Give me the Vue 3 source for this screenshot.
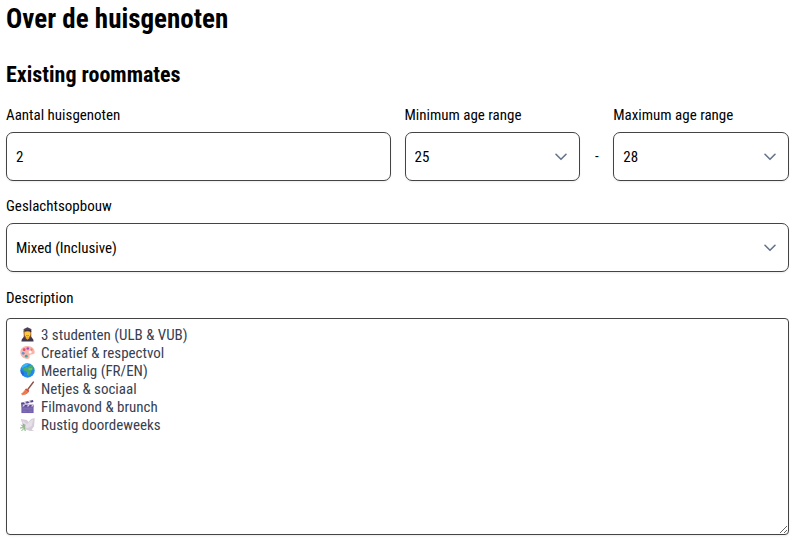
<script setup>
import { ref } from 'vue'

const count = ref('2')
const minAge = ref('25')
const maxAge = ref('28')
const gender = ref('Mixed (Inclusive)')
const description = ref(
  [
    '3 studenten (ULB & VUB)',
    'Creatief & respectvol',
    'Meertalig (FR/EN)',
    'Netjes & sociaal',
    'Filmavond & brunch',
    'Rustig doordeweeks',
  ].join('\n')
)
const ages = Array.from({ length: 43 }, (_, i) => String(18 + i))
const genders = ['Mixed (Inclusive)', 'Female', 'Male']
</script>

<template>
  <main class="page">
    <h1>Over de huisgenoten</h1>
    <h2>Existing roommates</h2>

    <form class="form" @submit.prevent>
      <div class="row">
        <div class="field">
          <label for="count">Aantal huisgenoten</label>
          <input id="count" v-model="count" class="control" type="text" inputmode="numeric" />
        </div>
        <div class="range">
          <div class="field">
            <label for="min-age">Minimum age range</label>
            <div class="select">
              <select id="min-age" v-model="minAge" class="control">
                <option v-for="age in ages" :key="age">{{ age }}</option>
              </select>
              <svg class="chevron" viewBox="0 0 12 8" aria-hidden="true"><path d="M1 1.300 6 6.300l5-5" /></svg>
            </div>
          </div>
          <span class="dash">-</span>
          <div class="field">
            <label for="max-age">Maximum age range</label>
            <div class="select">
              <select id="max-age" v-model="maxAge" class="control">
                <option v-for="age in ages" :key="age">{{ age }}</option>
              </select>
              <svg class="chevron" viewBox="0 0 12 8" aria-hidden="true"><path d="M1 1.300 6 6.300l5-5" /></svg>
            </div>
          </div>
        </div>
      </div>

      <div class="field">
        <label for="gender">Geslachtsopbouw</label>
        <div class="select">
          <select id="gender" v-model="gender" class="control">
            <option v-for="item in genders" :key="item">{{ item }}</option>
          </select>
          <svg class="chevron" viewBox="0 0 12 8" aria-hidden="true"><path d="M1 1.300 6 6.300l5-5" /></svg>
        </div>
      </div>

      <div class="field description">
        <label for="description">Description</label>
        <div class="editor">
          <textarea id="description" v-model="description" spellcheck="false"></textarea>
          <div class="marks" aria-hidden="true">
            <!-- graduate -->
            <svg viewBox="0 0 16 16">
              <path d="M4 4h8v6l1 2H3l1-2z" fill="#7b4a35" />
              <path d="M1.500 15.500c0-3 2-4.500 4.500-4.500h4c2.500 0 4.500 1.500 4.500 4.500z" fill="#40364f" />
              <path d="M6 10h4v2l-2 1.500L6 12z" fill="#e7a936" />
              <ellipse cx="8" cy="7.300" rx="3.300" ry="3.700" fill="#ffc83d" />
              <path d="M4 2.500h8v2.700c-2-1-6-1-8 0z" fill="#33293f" />
              <path d="M8 .3 12.500 2.300 8 4 3.500 2.300z" fill="#4b4059" />
              <path d="M4.200 3.500v3.500" stroke="#d99a2c" />
              <path d="M6.700 9q1.300.8 2.600 0" stroke="#a24b36" stroke-width=".7" />
            </svg>
            <!-- palette -->
            <svg viewBox="0 0 16 16">
              <path d="M8 1C3.500 1 .3 3.800.3 7.800c0 4 3.200 7 7.500 7 2 0 2.600-1 2.300-2.300-.3-1.500.3-2.500 1.900-2.500 2.300 0 3.700-.4 3.700-2.500C15.700 4 12.500 1 8 1z" fill="#f9b5a9" />
              <circle cx="10.800" cy="7.500" r="1.600" fill="#fff" />
              <circle cx="4.500" cy="5" r="1.500" fill="#e64b68" />
              <circle cx="8.300" cy="3.700" r="1.400" fill="#a94acb" />
              <circle cx="12.300" cy="4.900" r="1.200" fill="#ef7f50" />
              <circle cx="3.400" cy="8.900" r="1.500" fill="#4d9ae8" />
              <circle cx="6.700" cy="11.900" r="1.500" fill="#34aaa7" />
            </svg>
            <!-- globe -->
            <svg viewBox="0 0 16 16">
              <circle cx="8" cy="8" r="7.700" fill="#2389e8" />
              <path d="M1.500 4.500A7.700 7.700 0 0 1 8 .3l1 1-2 2.200-3 .7-1 2z" fill="#3bb5f0" />
              <path d="m3.500 5.500 3-1.200 2 .3 1-1.500 1.500-.4L9.500 1A7.500 7.500 0 0 1 14.500 5l-.7 2-2 1.500-.7 3-2.300 2.300-1.300-1.200.1-2.600-1.500-1.500-2-.5z" fill="#49ad68" />
              <path d="M.6 7.500 3 9l1.500 2-1 2.500A7.500 7.500 0 0 1 .6 7.500z" fill="#2868d5" />
              <path d="m9 5 2 .8 1.700-.5.3 1.700-2 .6-2-.8z" fill="#75c56f" />
            </svg>
            <!-- broom -->
            <svg viewBox="0 0 16 16">
              <path d="m14.200 1.200-6 8" stroke="#8e5146" stroke-width="1.700" stroke-linecap="round" />
              <path d="m6.500 8 3.300 2.400c-.6 2.600-3 4.500-7.400 4.800L1 13.700c2.500-1.200 3.200-3.600 5.500-5.700z" fill="#f28455" />
              <path d="m6.500 8 3.300 2.400-.7 1.400L5.400 9z" fill="#cf4e4e" />
              <path d="m6.700 10.300-3 3.400m4.500-2.500-2.500 3" stroke="#db653f" stroke-width=".7" />
            </svg>
            <!-- clapper board -->
            <svg viewBox="0 0 16 16">
              <path d="M1.500 7h13v8h-13z" fill="#7461ad" />
              <path d="M1.500 6h13v2h-13z" fill="#5a478f" />
              <path d="m1 4 12.800-3 .5 2.300L1.500 6.300z" fill="#59478c" />
              <path d="m3.500 3.400 2 1.900 2-.5-2-1.900zm4.800-1.100 2 1.900 1.900-.5-1.900-1.900zM3.500 6 2.200 8h2L5.500 6zm5 0L7.200 8h2l1.300-2zm4.500 0-1.300 2h2l.8-1.300V6z" fill="#d7cce9" />
              <path d="M3 10.500h10M3 13h4m2 0h4" stroke="#8575b9" />
            </svg>
            <!-- dove -->
            <svg viewBox="0 0 16 16">
              <path d="M.8 2 7.500 3.200l1.200 2L12 2l3.700-1-.7 9-2.500 3.200 2.500 1.600-4.300.2-5.800-2.300-2-4z" fill="#d5cdd9" />
              <path d="m2.500 3.800 5 3.700 4.500-4 2-.5-1.500 6.500-4.500 2.500-4-2z" fill="#e5dfe8" />
              <circle cx="4.300" cy="9" r="1.900" fill="#c9c0ce" />
              <path d="m4.500 11.500-3-3m1.700 3-2.700.2m4-1-.5-3M4.500 12 2 14.500m3-2 .5 2" stroke="#70a765" stroke-linecap="round" />
            </svg>
          </div>
        </div>
      </div>
    </form>
  </main>
</template>

<style>
body {
  background: #fff;
}
</style>

<style scoped>
.page {
  box-sizing: border-box;
  padding: 2px 11px 12px 6px;
  color: #000;
  font-family: "Roboto Condensed", "Liberation Sans Narrow", Roboto, sans-serif;
  font-size: 15px;
  line-height: 20px;
}

h1,
h2 {
  margin: 0;
  font-weight: 700;
}

h1 {
  font-size: 27px;
  line-height: 34px;
}

h2 {
  margin-top: 24px;
  font-size: 22px;
  line-height: 30px;
}

.form {
  display: grid;
  gap: 15px;
  margin-top: 15px;
}

.row {
  display: grid;
  grid-template-columns: 1fr 1fr;
  gap: 14px;
}

.range {
  display: grid;
  grid-template-columns: 1fr 33px 1fr;
}

.field {
  display: grid;
  gap: 7px;
  min-width: 0;
}

.dash {
  align-self: end;
  line-height: 49px;
  text-align: center;
}

.control {
  box-sizing: border-box;
  width: 100%;
  height: 49px;
  margin: 0;
  padding: 0 9px;
  border: 1px solid #444;
  border-radius: 7px;
  background: #fff;
  box-shadow: 0 1px 2px rgb(0 0 0 / 8%);
  color: #000;
  font: inherit;
  appearance: none;
}

.select {
  display: grid;
  align-items: center;
}

.select > * {
  grid-area: 1 / 1;
}

.chevron {
  justify-self: end;
  width: 12px;
  height: 8px;
  margin-right: 13px;
  fill: none;
  stroke: #64748b;
  stroke-width: 1.6;
  stroke-linecap: round;
  stroke-linejoin: round;
  pointer-events: none;
}

.description {
  gap: 10px;
  margin-top: 1px;
}

.editor {
  position: relative;
  display: grid;
}

textarea {
  box-sizing: border-box;
  width: 100%;
  height: 217px;
  margin: 0;
  padding: 7px 12px 7px 34px;
  border: 1px solid #444;
  border-radius: 4px;
  background: #fff;
  box-shadow: 0 1px 2px rgb(0 0 0 / 8%);
  color: #374151;
  font: inherit;
  line-height: 18px;
  resize: vertical;
}

.marks {
  position: absolute;
  top: 9px;
  left: 14px;
  display: grid;
  gap: 3px;
  pointer-events: none;
}

.marks svg {
  width: 15px;
  height: 15px;
  fill: none;
}
</style>
